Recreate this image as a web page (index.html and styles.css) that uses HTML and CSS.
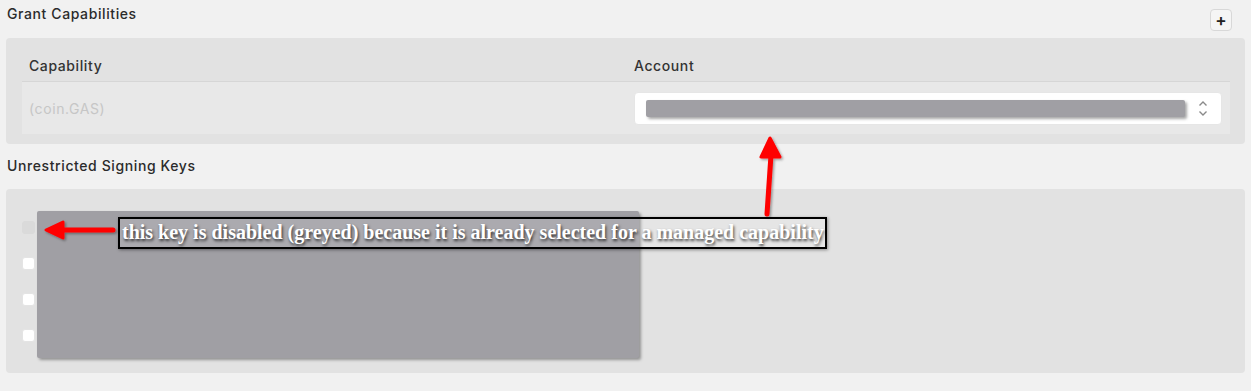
FILE: index.html
```html
<!DOCTYPE html>
<html lang="en">
<head>
    <meta charset="UTF-8">
    <meta name="viewport" content="width=device-width, initial-scale=1.0">
    <link rel="stylesheet" href="styles.css">
    <title>Grant Capabilities</title>
</head>
<body>

<div class="page">
    <div class="section-head">
        <h2 class="section-title">Grant Capabilities</h2>
        <button class="add-btn">+</button>
    </div>

    <div class="panel caps-panel">
        <div class="caps-table">
            <div class="caps-row caps-header">
                <div class="cell">Capability</div>
                <div class="cell account">Account</div>
            </div>
            <div class="caps-row caps-body">
                <div class="cell cap-name">(coin.GAS)</div>
                <div class="cell account">
                    <div class="select">
                        <div class="redacted"></div>
                        <svg class="chevrons" width="10" height="17" viewBox="0 0 10 17">
                            <path d="M1.5 5.5 L5 2 L8.5 5.5" fill="none" stroke="#8a8a8a" stroke-width="1.4"/>
                            <path d="M1.5 11.5 L5 15 L8.5 11.5" fill="none" stroke="#8a8a8a" stroke-width="1.4"/>
                        </svg>
                    </div>
                </div>
            </div>
        </div>
    </div>

    <div class="section-head second">
        <h2 class="section-title">Unrestricted Signing Keys</h2>
    </div>

    <div class="panel keys-panel">
        <div class="key-row"><span class="checkbox disabled"></span></div>
        <div class="key-row"><span class="checkbox"></span></div>
        <div class="key-row"><span class="checkbox"></span></div>
        <div class="key-row"><span class="checkbox"></span></div>

        <div class="redacted-block"></div>
        <div class="note">this key is disabled (greyed) because it is already selected for a managed capability</div>
    </div>
</div>

<!-- annotation arrows drawn over the screenshot -->
<svg class="arrows" width="1251" height="391" viewBox="0 0 1251 391">
    <defs>
        <filter id="shadow" x="-20%" y="-20%" width="140%" height="140%">
            <feDropShadow dx="1.5" dy="1.5" stdDeviation="1.2" flood-color="#000" flood-opacity="0.35"/>
        </filter>
    </defs>
    <g filter="url(#shadow)" fill="#ff0000" stroke="#ff0000" stroke-linejoin="round" stroke-linecap="round">
        <line x1="113" y1="230" x2="60" y2="230" stroke-width="5"/>
        <polygon points="46,230 63,222 63,238" stroke-width="3"/>
        <line x1="767" y1="214" x2="771" y2="155" stroke-width="5"/>
        <polygon points="770,138 761,157 780,157" stroke-width="3"/>
    </g>
</svg>

</body>
</html>
```

FILE: styles.css
```css
body {
    margin: 0;
    background-color: #f1f1f1;
    font-family: Inter, "Open Sans", sans-serif;
    font-size: 14px;
    letter-spacing: 0.6px;
    color: #2b2b2b;
}

.page {
    padding: 0 6px;
}

.section-head {
    display: flex;
    justify-content: space-between;
    align-items: flex-start;
    height: 38px;
}

.section-head.second {
    height: 45px;
}

.section-title {
    margin: 0;
    padding: 5px 0 0 1px;
    font-size: 14px;
    font-weight: 500;
    line-height: 17px;
}

.second .section-title {
    padding-top: 13px;
}

.add-btn {
    width: 22px;
    height: 22px;
    margin: 9px 13px 0 0;
    padding: 0;
    background-color: #f5f5f5;
    border: 1px solid #d8d8d8;
    border-radius: 4px;
    font-family: Inter, sans-serif;
    font-size: 17px;
    font-weight: 600;
    line-height: 18px;
    color: #222;
    cursor: pointer;
}

.panel {
    background-color: #e2e2e2;
    border-radius: 4px;
}

.caps-panel {
    height: 106px;
    padding: 12px 15px 0 16px;
    box-sizing: border-box;
}

.caps-row {
    display: grid;
    grid-template-columns: 1fr 1fr;
}

.cell {
    padding: 0 8px 0 7px;
}

.cell.account {
    padding-left: 8px;
}

.caps-header {
    height: 31px;
    align-items: center;
    border-bottom: 1px solid #d6d6d6;
    font-weight: 500;
    color: #333;
}

.caps-body {
    height: 52px;
    align-items: center;
    background-color: #e8e8e8;
}

.cap-name {
    color: #c6c6c6;
}

.select {
    display: flex;
    align-items: center;
    justify-content: space-between;
    height: 33px;
    padding: 0 13px 0 11px;
    background-color: #fff;
    border: 1px solid #e6e6e6;
    border-radius: 4px;
    box-sizing: border-box;
}

.redacted {
    width: 539px;
    height: 17px;
    background-color: #a09fa4;
    border-radius: 2px;
    box-shadow: 2px 2px 3px rgba(0, 0, 0, 0.35);
}

.keys-panel {
    position: relative;
    height: 184px;
    padding: 32px 16px 0;
    box-sizing: border-box;
}

.key-row {
    height: 36px;
}

.checkbox {
    display: block;
    width: 13px;
    height: 13px;
    background-color: #fff;
    border: 1px solid #e4e4e4;
    border-radius: 3px;
    box-sizing: border-box;
}

.checkbox.disabled {
    background-color: #dadada;
    border-color: #dadada;
}

.redacted-block {
    position: absolute;
    left: 31px;
    top: 22px;
    width: 602px;
    height: 147px;
    background-color: #a09fa4;
    border-radius: 2px;
    box-shadow: 2px 2px 3px rgba(0, 0, 0, 0.35);
}

.note {
    position: absolute;
    left: 112px;
    top: 28px;
    width: 709px;
    height: 32px;
    border: 2px solid #000;
    background-color: rgba(255, 255, 255, 0.12);
    box-shadow: 1px 1px 3px rgba(0, 0, 0, 0.4);
    box-sizing: border-box;
    font-family: "Liberation Serif", "Times New Roman", serif;
    font-weight: bold;
    font-size: 20px;
    letter-spacing: 0;
    line-height: 27px;
    padding-left: 2px;
    white-space: nowrap;
    color: #fff;
    text-shadow: 1px 2px 3px rgba(0, 0, 0, 0.75);
}

.arrows {
    position: absolute;
    left: 0;
    top: 0;
    pointer-events: none;
}
```
